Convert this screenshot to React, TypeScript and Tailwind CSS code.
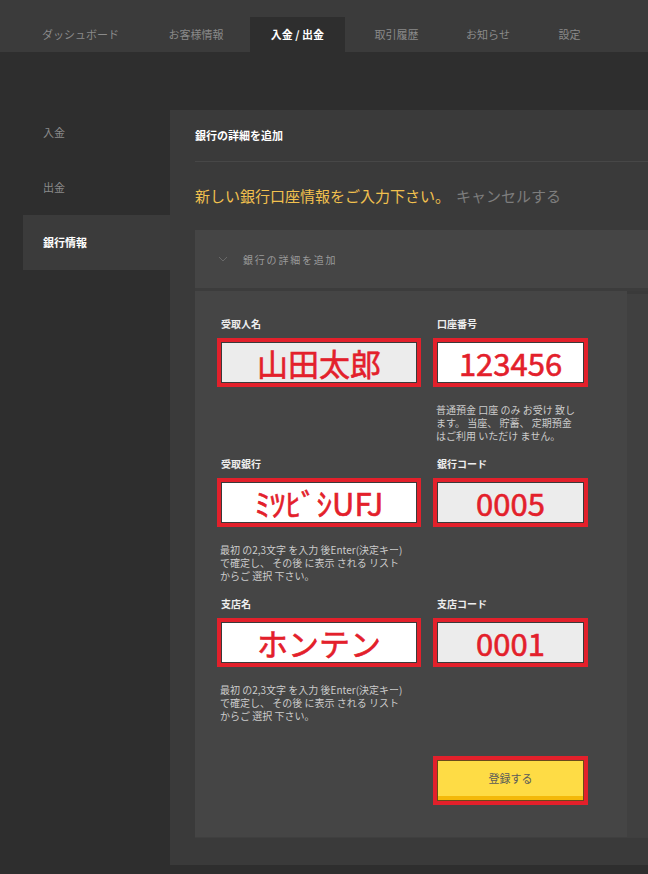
import React from "react";

const tabs = [
  { label: "ダッシュボード", w: "w-[123px]" },
  { label: "お客様情報", w: "w-[108px]" },
  { label: "入金 / 出金", w: "w-[95px]", active: true },
  { label: "取引履歴", w: "w-[103px]" },
  { label: "お知らせ", w: "w-[80px]" },
  { label: "設定", w: "w-[83px]" },
];

function Field({
  label,
  value,
  fill,
}: {
  label: string;
  value: string;
  fill: "white" | "gray";
}) {
  return (
    <div className="flex flex-col">
      <div className="h-[14px] pl-[4px] text-[10px] font-bold leading-[14px] text-[#eeeeee]">
        {label}
      </div>
      <div className="mt-[7px] h-[49px] border-4 border-[#e3202b]">
        <div
          className={
            "flex h-full items-center justify-center border border-[#3a3a3a] text-[31px] font-normal leading-none text-[#e3202b] [-webkit-text-stroke:0.6px_#e3202b] " +
            (fill === "white" ? "bg-white" : "bg-[#ececec]")
          }
        >
          {value}
        </div>
      </div>
    </div>
  );
}

function Help({ lines }: { lines: string[] }) {
  return (
    <div className="mt-[16px] pl-[3px] text-[10px] leading-[13px] text-[#cccccc]">
      {lines.map((l, i) => (
        <div key={i} className="h-[13px] whitespace-nowrap">
          {l}
        </div>
      ))}
    </div>
  );
}

const searchHelp = [
  "最初 の2,3文字 を入力 後Enter(決定キー)",
  "で確定し、 その後 に表示 される リスト",
  "からご 選択 下さい。",
];

export default function App() {
  return (
    <div className="min-h-[874px] overflow-hidden bg-[#2e2e2e] font-['Noto_Sans_CJK_JP','Noto_Sans',sans-serif]">
      <nav className="flex h-[52px] items-end bg-[#3b3b3b] pl-[19px]">
        {tabs.map((t) => (
          <div
            key={t.label}
            className={
              "flex h-[35px] items-center justify-center text-[11px] " +
              t.w +
              " " +
              (t.active
                ? "bg-[#2e2e2e] font-bold text-white"
                : "text-[#8a8a8a]")
            }
          >
            {t.label}
          </div>
        ))}
      </nav>

      <div className="mt-[53px] flex">
        <aside className="w-[170px] shrink-0 pl-[23px]">
          {["入金", "出金", "銀行情報"].map((s) => (
            <div
              key={s}
              className={
                "flex h-[55px] items-center pl-[20px] text-[11px] " +
                (s === "銀行情報"
                  ? "bg-[#3b3b3b] font-bold text-white"
                  : "text-[#8a8a8a]")
              }
            >
              {s}
            </div>
          ))}
        </aside>

        <main className="mt-[5px] h-[755px] flex-1 bg-[#3a3a3a] pl-[25px]">
          <div className="flex h-[52px] items-center border-b border-[#474747] text-[11px] font-bold text-white">
            銀行の詳細を追加
          </div>
          <div className="flex h-[68px] items-center text-[15px]">
            <span className="text-[#f2c14e]">新しい銀行口座情報をご入力下さい。</span>
            <span className="ml-[6px] text-[#7d7d7d]">キャンセルする</span>
          </div>

          <div className="flex h-[61px] items-center border-b-[3px] border-[#3c3c3c] bg-[#454545] pl-[23px]">
            <svg width="10" height="6" viewBox="0 0 10 6" className="mr-[15px]">
              <path d="M1 1 L5 5 L9 1" fill="none" stroke="#686868" strokeWidth="1" />
            </svg>
            <span className="text-[10px] tracking-[1.8px] text-[#9a9a9a]">銀行の詳細を追加</span>
          </div>

          <div className="flex h-[546px]">
            <div className="w-[432px] bg-[#454545] pl-[22px] pt-[26px]">
              <div className="grid grid-cols-[204px_155px] gap-x-[12px]">
                <Field label="受取人名" value="山田太郎" fill="gray" />
                <Field label="口座番号" value="123456" fill="white" />
                <div />
                <Help
                  lines={[
                    "普通預金 口座 のみ お受け 致し",
                    "ます。 当座、 貯蓄、 定期預金",
                    "はご利用 いただけ ません。",
                  ]}
                />
              </div>
              <div className="mt-[15px] grid grid-cols-[204px_155px] gap-x-[12px]">
                <Field label="受取銀行" value="ﾐﾂﾋﾞｼUFJ" fill="white" />
                <Field label="銀行コード" value="0005" fill="gray" />
                <Help lines={searchHelp} />
                <div />
              </div>
              <div className="mt-[15px] grid grid-cols-[204px_155px] gap-x-[12px]">
                <Field label="支店名" value="ホンテン" fill="white" />
                <Field label="支店コード" value="0001" fill="gray" />
                <Help lines={searchHelp} />
                <div />
              </div>
              <div className="mt-[34px] grid grid-cols-[204px_155px] gap-x-[12px]">
                <div />
                <div className="h-[49px] border-4 border-[#e3202b]">
                  <div className="flex h-full flex-col border border-[#6b4a1a] bg-[#fedc45]">
                    <div className="flex flex-1 items-center justify-center text-[11px] text-[#5a5a5a]">
                      登録する
                    </div>
                    <div className="h-[4px] bg-[#f4b90a]" />
                  </div>
                </div>
              </div>
            </div>
            <div className="mt-[3px] flex-1 bg-[#404040]" />
          </div>
          <div className="h-[1px] bg-[#3f3f3f]" />
        </main>
      </div>
    </div>
  );
}
